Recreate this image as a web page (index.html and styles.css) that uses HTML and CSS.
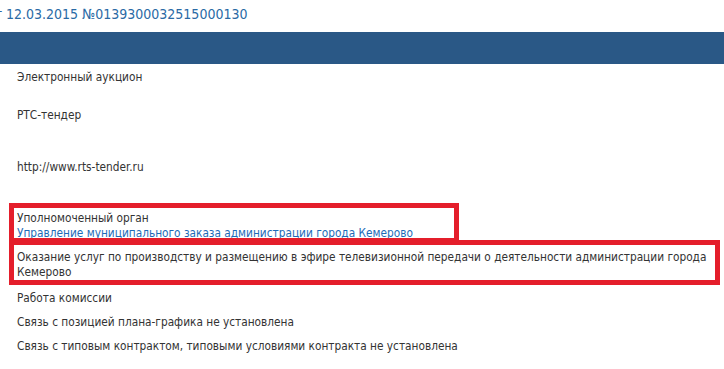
FILE: index.html
```html
<!DOCTYPE html>
<html lang="ru">
<head>
    <meta charset="UTF-8">
    <meta name="viewport" content="width=device-width, initial-scale=1.0">
    <title>Извещение №0139300032515000130</title>
    <link rel="stylesheet" href="styles.css">
</head>
<body>
    <div class="page">
        <h1 class="notice-title">от 12.03.2015 №0139300032515000130</h1>
        <div class="section-bar"></div>
        <div class="info">
            <div class="row row-r1">Электронный аукцион</div>
            <div class="row row-r2">РТС-тендер</div>
            <div class="row row-r3">http://www.rts-tender.ru</div>
            <div class="row row-r4">
                Уполномоченный орган<br>
                <a href="#" class="org-link">Управление муниципального заказа администрации города Кемерово</a>
            </div>
            <div class="row row-r5">Оказание услуг по производству и размещению в эфире телевизионной передачи о деятельности администрации города Кемерово</div>
            <div class="row">Работа комиссии</div>
            <div class="row">Связь с позицией плана-графика не установлена</div>
            <div class="row">Связь с типовым контрактом, типовыми условиями контракта не установлена</div>

            <!-- red marks drawn over the screenshot -->
            <div class="mark mark-org"></div>
            <div class="mark mark-subject"></div>
        </div>
    </div>
</body>
</html>
```

FILE: styles.css
```css
body {
    margin: 0;
    background: #fff;
    font-family: "DejaVu Sans Condensed", "DejaVu Sans", sans-serif;
    font-stretch: condensed;
    color: #333;
    overflow: hidden;
}
.page {
    width: 724px;
}
.notice-title {
    margin: 0;
    height: 32px;
    padding: 5px 0 0 0;
    box-sizing: border-box;
    margin-left: -13px;
    font-size: 14px;
    font-weight: normal;
    line-height: 18px;
    color: #2a6aa5;
    white-space: nowrap;
}
.section-bar {
    height: 32px;
    background-color: #2a5886;
}
.info {
    position: relative;
    padding-top: 2px;
}
.row {
    box-sizing: border-box;
    min-height: 24px;
    padding: 4px 4px 5px 17px;
    font-size: 11.75px;
    line-height: 15px;
}
.row-r1 { min-height: 38px; }
.row-r2 { min-height: 52px; }
.row-r3 { min-height: 51px; }
.row-r4 { min-height: 37px; }
.row-r5 { min-height: 41px; padding-right: 10px; }
.org-link {
    color: #1d6bb8;
    text-decoration: none;
}
.mark {
    position: absolute;
    border: 5px solid #e41e2b;
    box-sizing: border-box;
}
.mark-org {
    left: 9px;
    top: 139px;
    width: 450px;
    height: 40px;
}
.mark-subject {
    left: 9px;
    top: 176px;
    width: 711px;
    height: 45px;
}
```
